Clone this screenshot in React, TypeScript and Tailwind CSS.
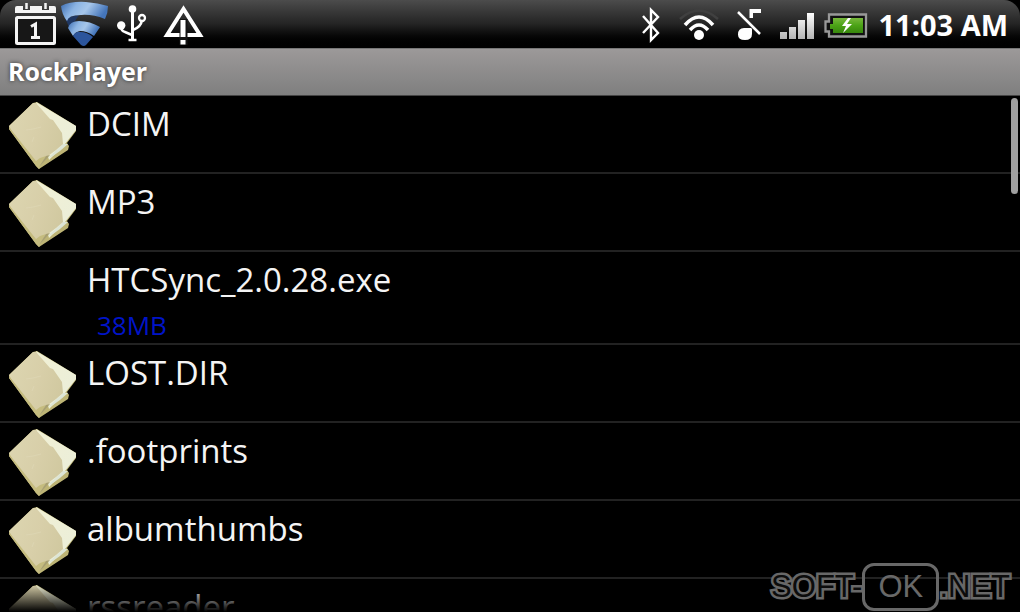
type Entry = { name: string; size?: string };

const entries: Entry[] = [
  { name: "DCIM" },
  { name: "MP3" },
  { name: "HTCSync_2.0.28.exe", size: "38MB" },
  { name: "LOST.DIR" },
  { name: ".footprints" },
  { name: "albumthumbs" },
  { name: "rssreader" },
];

function FolderIcon() {
  return (
    <svg viewBox="0 0 70 68" className="h-[68px] w-[70px]" aria-hidden="true">
      <defs>
        <linearGradient id="cover" x1="0" y1="0.3" x2="1" y2="0.7">
          <stop offset="0" stopColor="#dcd5b0" />
          <stop offset="0.5" stopColor="#d8cfa9" />
          <stop offset="1" stopColor="#d0c89f" />
        </linearGradient>
        <linearGradient id="sheet" x1="0" y1="0" x2="1" y2="1">
          <stop offset="0" stopColor="#f1f0d4" />
          <stop offset="1" stopColor="#eaeeda" />
        </linearGradient>
      </defs>
      <path d="M29 0 L68 24 L68 29 L59 41 L61 44 L60 48 L31 67 L28 64 L1 27 L1 24 L25 1Z" fill="#bdb475" />
      <path d="M28 0 L68 24 L68 28 L57 42 L41 58 L36 40Z" fill="url(#sheet)" />
      <path d="M55 42 L60 42 L52 49 L45 54 L40 56Z" fill="#dde5d6" />
      <path d="M25 1 L28 1 L42 17 L45 18 L54 31 L55 42 L48 48 L40 54 L32 64 L30 65 L3 28 L1 24Z" fill="url(#cover)" />
      <path d="M1 25 L28 59 L32 56 L38 54 L31 67 L28 64 L1 27Z" fill="#c5bc7f" />
      <path d="M38 54 L42 53 L33 63 L31 65Z" fill="#a79f72" />
      <path d="M18 28 L25 27 L33 25 M26 35 L24 40" stroke="#e0d9b8" fill="none" opacity="0.6" />
    </svg>
  );
}

function CalendarIcon() {
  return (
    <svg viewBox="0 0 42 44" className="h-11 w-[42px]" aria-label="Calendar">
      <path d="M2 4h6v4h7V4h12v4h7V4h5a2 2 0 0 1 2 2v5H0V6a2 2 0 0 1 2-2Z" fill="#f4f4f4" />
      <path d="M11.500 1v6M30.500 1v6" stroke="#f4f4f4" strokeWidth="2.500" />
      <rect x="1.5" y="15.5" width="38" height="26" rx="1" fill="#171717" stroke="#f4f4f4" strokeWidth="3" />
      <path d="M16 24.500l4.500-2.500v12M16 35.500h9" stroke="#f4f4f4" strokeWidth="3" fill="none" />
    </svg>
  );
}

function ShieldIcon() {
  return (
    <svg viewBox="0 0 48 46" className="h-[46px] w-12" aria-label="Protection">
      <defs>
        <linearGradient id="shield" x1="0" y1="0" x2="1" y2="0.3">
          <stop offset="0" stopColor="#3a6bb0" />
          <stop offset="0.35" stopColor="#8db5e4" />
          <stop offset="0.6" stopColor="#a6c6ea" />
          <stop offset="1" stopColor="#4475ba" />
        </linearGradient>
      </defs>
      <path d="M4 17 L18 14 L14 20 L8 26Z" fill="#1f3763" />
      <path d="M0 5 Q10 0 25 1 Q37 2 47 5 Q47 12 44 18 Q31 13 20 14 Q7 14 6 20 Q1 14 0 5Z" fill="url(#shield)" />
      <path d="M7 27 Q9 20 18 20 Q29 20 39 26 L33 35 Q26 30 19 30 Q14 31 12 35Z" fill="url(#shield)" />
      <path d="M12 35 Q15 30 20 31 Q26 31 32 36 L25 44 Q23 46 20 44Z" fill="#2c559c" />
    </svg>
  );
}

function UsbIcon() {
  return (
    <svg viewBox="0 0 30 38" className="h-[38px] w-[30px]" fill="none" stroke="#fff" strokeWidth="2" aria-label="USB">
      <path d="M15.500 4v31" strokeWidth="3" />
      <path d="M11.500 35h8" strokeWidth="2.500" />
      <path d="M4 21q0 5 4 6l7 3M25 15q-1 7-9 10" strokeWidth="2.500" />
      <circle cx="15.500" cy="4" r="3.800" fill="#fff" stroke="none" />
      <circle cx="4.200" cy="20.500" r="4.200" fill="#fff" stroke="none" />
      <circle cx="25" cy="13" r="3" strokeWidth="2.300" />
    </svg>
  );
}

function WarningIcon() {
  return (
    <svg viewBox="0 0 41 42" className="h-[42px] w-[41px]" aria-label="Warning">
      <path d="M4 32 20.500 6 37 32Z" fill="none" stroke="#fff" strokeWidth="4" />
      <path d="M20.500 16v26" stroke="#141414" strokeWidth="8" />
      <path d="M20 17v17M20 37v4.500" stroke="#fff" strokeWidth="5" />
    </svg>
  );
}

function BluetoothIcon() {
  return (
    <svg viewBox="0 0 20 36" className="h-9 w-5" fill="none" stroke="#fff" strokeWidth="2.400" aria-label="Bluetooth">
      <path d="M2 9l15 17-7 7V3l7 7L2 26" />
    </svg>
  );
}

function WifiIcon() {
  return (
    <svg viewBox="0 0 40 34" className="h-[34px] w-10" fill="none" aria-label="Wi-Fi">
      <path d="M1 11Q20-6 39 11" stroke="#404040" strokeWidth="2.500" />
      <path d="M6 17Q20 1 34 17" stroke="#fff" strokeWidth="3.500" />
      <path d="M11 22Q20 12 29 22" stroke="#fff" strokeWidth="3.500" />
      <circle cx="20" cy="27" r="5" fill="#fff" />
    </svg>
  );
}

function MutedNoteIcon() {
  return (
    <svg viewBox="0 0 26 34" className="h-[34px] w-[26px]" aria-label="Silent">
      <path d="M1 4l22 22" stroke="#fff" strokeWidth="2.500" />
      <path d="M12.500 10V1H24v4h-8V10Z" fill="#fff" />
      <path d="M7 20h7l1 1v5q0 6-7 6T1 26.500Q1 20 7 20Z" fill="#fff" />
    </svg>
  );
}

function SignalIcon() {
  return (
    <svg viewBox="0 0 34 26" className="h-[26px] w-[34px]" aria-label="Signal">
      <defs>
        <linearGradient id="bars" x1="0" y1="0" x2="0" y2="26" gradientUnits="userSpaceOnUse">
          <stop offset="0" stopColor="#fff" />
          <stop offset="1" stopColor="#b4b4b4" />
        </linearGradient>
      </defs>
      <path d="M0 19h7v7H0ZM9 14h7v12H9ZM18 7h7v19h-7ZM27 0h7v26h-7Z" fill="url(#bars)" />
    </svg>
  );
}

function BatteryIcon() {
  return (
    <svg viewBox="0 0 44 26" className="h-[26px] w-11" aria-label="Battery charging">
      <defs>
        <linearGradient id="charge" x1="0" y1="0" x2="0" y2="1">
          <stop offset="0" stopColor="#78b83c" />
          <stop offset="0.5" stopColor="#4ba316" />
          <stop offset="1" stopColor="#37860c" />
        </linearGradient>
      </defs>
      <path d="M5 1.500h37v22H5v-5H1.500v-10H5Z" fill="#111" stroke="#999" strokeWidth="2.300" />
      <path d="M9 5h30v15H9v-4H6v-5h3Z" fill="url(#charge)" />
      <path d="M24 5l-6 8h4l-3 7 9-9h-5l4-6Z" fill="#fff" />
    </svg>
  );
}

function EntryRow({ name, size }: Entry) {
  return (
    <li className="border-b-2 border-[#222]">
      <a href="#" className={size ? "flex h-[91px] gap-2 pl-2" : "flex h-[76px] gap-2 pl-2"}>
        <span className="w-[71px] shrink-0 pt-[6px]">{!size && <FolderIcon />}</span>
        <span className="flex flex-col">
          <span className="pt-[5px] text-[33px] leading-[46px] font-medium text-[#f4f4f4]">{name}</span>
          {size && <span className="pl-[10px] text-[26px] leading-[44px] text-[#0014c8]">{size}</span>}
        </span>
      </a>
    </li>
  );
}

const outline = "text-[#0c0c0c] [paint-order:stroke_fill] [-webkit-text-stroke:5px_#686868]";

export default function App() {
  return (
    <div className="relative flex h-screen flex-col overflow-hidden bg-black font-['Open_Sans','Noto_Sans',sans-serif] text-white">
      <header className="flex h-12 shrink-0 items-center justify-between rounded-t-2xl bg-linear-to-b from-[#4c4c4c] via-[#242424] to-black pr-3 pl-[15px]">
        <div className="flex items-center gap-1">
          <CalendarIcon />
          <ShieldIcon />
          <div className="flex items-center gap-4 pl-1">
            <UsbIcon />
            <WarningIcon />
          </div>
        </div>
        <div className="flex items-center pt-[2px]">
          <div className="flex items-center gap-[18px] pr-[17px]">
            <BluetoothIcon />
            <WifiIcon />
            <MutedNoteIcon />
          </div>
          <div className="flex items-center gap-[11px]">
            <div className="flex items-center gap-[10px] pt-[2px]">
              <SignalIcon />
              <BatteryIcon />
            </div>
            <time className="text-[29px] leading-10 font-bold">11:03 AM</time>
          </div>
        </div>
      </header>
      <div className="h-12 shrink-0 border-y border-t-[#777] border-b-[#444] bg-linear-to-b from-[#9c9999] to-[#7f7f7f] px-2">
        <h1 className="text-[25px] leading-[44px] font-bold [text-shadow:0_0_4px_#333]">RockPlayer</h1>
      </div>
      <main className="relative min-h-0 flex-1 overflow-hidden">
        <ul>
          {entries.map((entry) => (
            <EntryRow key={entry.name} {...entry} />
          ))}
        </ul>
        <div className="absolute top-[2px] right-[2px] h-24 w-[7px] rounded-full bg-[#a0a0a0]" />
        <div className="absolute inset-x-0 bottom-0 h-7 bg-linear-to-b from-transparent to-black" />
      </main>
      <div className="absolute right-[10px] bottom-px flex items-center font-['Liberation_Sans',sans-serif] text-[31px] leading-[46px] text-[#686868]">
        <span className={outline}>SOFT-</span>
        <span className="w-[77px] rounded-xl border-[3px] border-[#686868] text-center leading-[42px]">OK</span>
        <span className={outline}>.NET</span>
      </div>
    </div>
  );
}
